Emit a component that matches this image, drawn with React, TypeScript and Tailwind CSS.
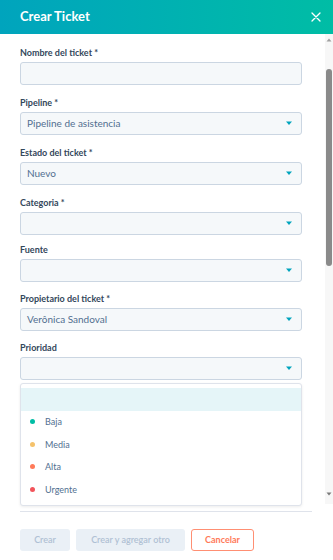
import React from "react";

const Caret = () => (
  <svg width="8" height="5" viewBox="0 0 8 5" className="shrink-0">
    <path d="M1 0.5 L7 0.5 L4 4 Z" fill="#00a4bd" />
  </svg>
);

type FieldProps = {
  label: string;
  value?: string;
  select?: boolean;
  className?: string;
  children?: React.ReactNode;
};

const Field = ({ label, value, select = true, className = "", children }: FieldProps) => (
  <div className={"relative " + className}>
    <div className="h-[12px] leading-[12px] text-[9px] font-bold text-[#33475b]">{label}</div>
    <div className="mt-[3px] h-[23px] rounded-[3px] border border-[#cbd6e2] bg-[#f5f8fa] flex items-center justify-between pl-[6px] pr-[8px]">
      <span className="text-[10px] text-[#516f90]">{value ?? ""}</span>
      {select && <Caret />}
    </div>
    {children}
  </div>
);

const options = [
  { label: "Baja", color: "#00bda5" },
  { label: "Media", color: "#f5c26b" },
  { label: "Alta", color: "#ff7a59" },
  { label: "Urgente", color: "#f2545b" },
];

export default function App() {
  return (
    <div
      className="w-[333px] h-[560px] bg-white overflow-hidden flex flex-col"
      style={{ fontFamily: "Lato, 'Noto Sans', sans-serif" }}
    >
      <div className="h-[34px] shrink-0 bg-gradient-to-r from-[#00a4bd] to-[#00bda5] flex items-center justify-between pl-[20px] pr-[12px]">
        <span className="text-white text-[13px] font-bold">Crear Ticket</span>
        <svg width="10" height="10" viewBox="0 0 10 10">
          <path d="M1 1 L9 9 M9 1 L1 9" stroke="white" strokeWidth="1.3" strokeLinecap="round" />
        </svg>
      </div>

      <div className="h-[470px] shrink-0 flex">
        <div className="flex-1 pl-[20px] pr-[23px] pt-[13px]">
          <Field label="Nombre del ticket *" select={false} />
          <Field label="Pipeline *" value="Pipeline de asistencia" className="mt-[12px]" />
          <Field label="Estado del ticket *" value="Nuevo" className="mt-[12px]" />
          <Field label="Categoria *" className="mt-[12px]" />
          <Field label="Fuente" className="mt-[9px]" />
          <Field label="Propietario del ticket *" value="Verônica Sandoval" className="mt-[11px]" />
          <Field label="Prioridad" className="mt-[11px]">
            <div className="absolute left-0 right-0 top-full mt-[3px] z-10 bg-white border border-[#dfe3eb] rounded-[3px] shadow-[0_1px_3px_rgba(0,0,0,0.08)] py-[4px]">
              <div className="h-[22.5px] bg-[#e5f5f8]" />
              {options.map((o) => (
                <div key={o.label} className="h-[22.5px] flex items-center pl-[9px]">
                  <span className="w-[5px] h-[5px] rounded-full" style={{ backgroundColor: o.color }} />
                  <span className="ml-[10px] text-[9px] text-[#516f90]">{o.label}</span>
                </div>
              ))}
            </div>
          </Field>
        </div>
        <div className="w-[8px] bg-[#f7f7f7] flex flex-col items-center">
          <svg width="6" height="4" viewBox="0 0 6 4" className="mt-[4px]">
            <path d="M0.5 3.5 L5.5 3.5 L3 0.5 Z" fill="#a0a0a0" />
          </svg>
          <div className="mt-[27px] w-[6px] h-[197px] rounded-[3px] bg-[#8a8a8a]" />
          <div className="flex-1" />
          <svg width="6" height="4" viewBox="0 0 6 4" className="mb-[8px]">
            <path d="M0.5 0.5 L5.5 0.5 L3 3.5 Z" fill="#7a7a7a" />
          </svg>
        </div>
      </div>

      <div className="ml-[20px] w-[292px] mt-[7px] border-t border-[#dfe3eb]" />
      <div className="flex pl-[20px] mt-[17px] gap-[6px]">
        <button className="h-[22px] w-[50px] rounded-[3px] bg-[#eaf0f6] text-[9px] font-semibold text-[#b0c1d4]">Crear</button>
        <button className="h-[22px] w-[109px] rounded-[3px] bg-[#eaf0f6] text-[9px] font-semibold text-[#b0c1d4]">Crear y agregar otro</button>
        <button className="h-[22px] w-[63px] rounded-[3px] bg-white border border-[#ff8f73] text-[9px] font-bold text-[#ff7a59]">Cancelar</button>
      </div>
    </div>
  );
}
